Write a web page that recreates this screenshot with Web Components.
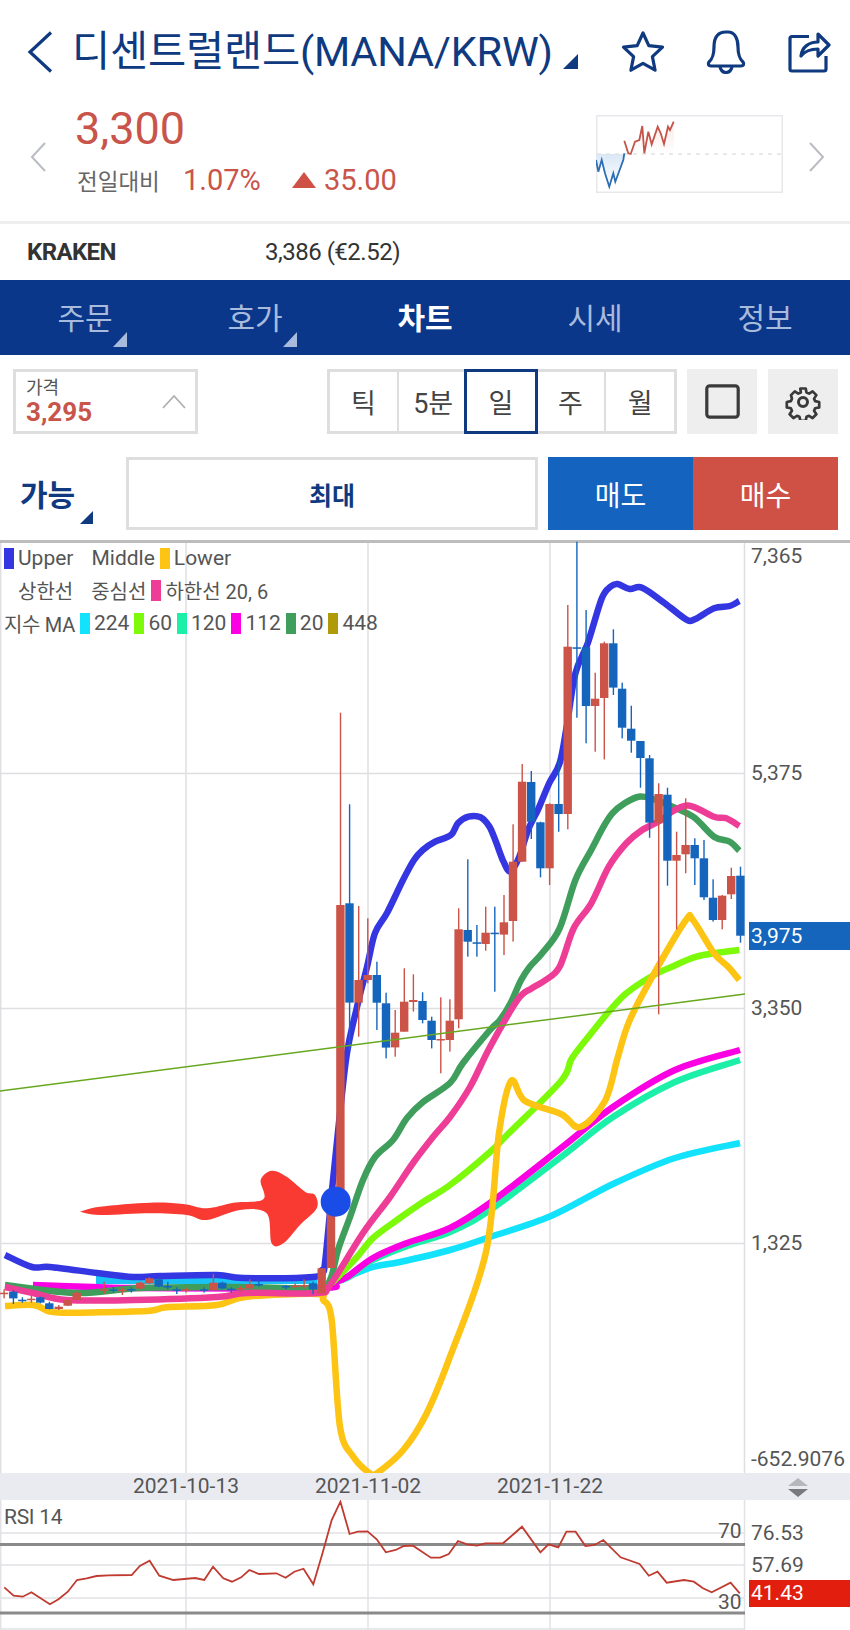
<!DOCTYPE html>
<html lang="ko">
<head>
<meta charset="utf-8">
<title>MANA/KRW</title>
<style>
  html, body { margin: 0; background: #fff; }
  body { width: 850px; font-family: Roboto, "Noto Sans CJK KR", sans-serif; }
</style>
</head>
<body>
<trade-screen>
  <coin-header title-text="디센트럴랜드(MANA/KRW)"></coin-header>
  <coin-quote></coin-quote>
  <exchange-row name="KRAKEN" value="3,386 (€2.52)"></exchange-row>
  <tab-bar></tab-bar>
  <chart-toolbar></chart-toolbar>
  <order-row></order-row>
  <price-chart></price-chart>
  <date-strip></date-strip>
  <rsi-panel></rsi-panel>
</trade-screen>

<script>
(function () {
  const FONT = 'Roboto, "Noto Sans CJK KR", sans-serif';
  const NAVY = '#0f3a80';
  const RED = '#c9544a';

  // small helper, every element is the same: open root + fixed markup
  function define(name, html) {
    customElements.define(name, class extends HTMLElement {
      constructor() {
        super();
        this.attachShadow({ mode: 'open' });
      }
      connectedCallback() {
        this.shadowRoot.innerHTML = typeof html === 'function' ? html(this) : html;
      }
    });
  }

  const pts = (list) => list.map((p) => p[0].toFixed(1) + ',' + p[1].toFixed(1)).join(' ');
  // crops of the chart were read in their own coordinates
  const z3 = (list) => list.map((p) => [300 + p[0] / 2.85, 540 + p[1] / 3]);
  const z4 = (list) => list.map((p) => [p[0] / 3, 1150 + p[1] / 3]);

  // catmull-rom through the points, the chart's averages are rounded
  function smooth(p) {
    let d = `M${p[0][0].toFixed(1)} ${p[0][1].toFixed(1)}`;
    for (let i = 0; i < p.length - 1; i++) {
      const a = p[i - 1] || p[i], b = p[i], c = p[i + 1], e = p[i + 2] || c;
      d += `C${(b[0] + (c[0] - a[0]) / 6).toFixed(1)} ${(b[1] + (c[1] - a[1]) / 6).toFixed(1)} ` +
        `${(c[0] - (e[0] - b[0]) / 6).toFixed(1)} ${(c[1] - (e[1] - b[1]) / 6).toFixed(1)} ${c[0].toFixed(1)} ${c[1].toFixed(1)}`;
    }
    return d;
  }

  define('trade-screen', `
    <style>:host { display: block; width: 850px; font-family: ${FONT}; overflow: hidden; }</style>
    <slot></slot>`);

  define('coin-header', (el) => `
    <style>
      :host { display: flex; align-items: center; height: 104px; box-sizing: border-box; position: relative; color: ${NAVY}; }
      .back { margin-left: 27px; width: 27px; height: 42px; flex: none; }
      h1 { margin: 0 0 0 18px; font: 400 41.5px/1 ${FONT}; white-space: nowrap; letter-spacing: -.2px; width: 478px; }
      .tri { width: 15px; height: 15px; margin: 18px 0 0 13px; flex: none; }
      .icons { display: flex; margin-left: 43px; gap: 41px; align-items: center; }
      svg { display: block; }
    </style>
    <svg class="back" viewBox="0 0 27 42" fill="none" stroke="${NAVY}" stroke-width="3.2"><path d="M24 1.5 3 21l21 19.5"/></svg>
    <h1>${el.getAttribute('title-text')}</h1>
    <svg class="tri" viewBox="0 0 15 15"><path d="M15 0v15H0z" fill="${NAVY}"/></svg>
    <div class="icons">
      <svg width="44" height="44" viewBox="0 0 44 44" fill="none" stroke="${NAVY}" stroke-width="3.2" stroke-linejoin="round"><path d="M22 3l5.800 12.600 13.700 1.600-10.100 9.400 2.700 13.600L22 33.400 9.900 40.200l2.700-13.600L2.500 17.200l13.700-1.600z"/></svg>
      <svg width="40" height="44" viewBox="0 0 40 44" fill="none" stroke="${NAVY}" stroke-width="3.2" stroke-linejoin="round"><path d="M20 2C11 2 8 9 8 17c0 9-2 12-5 15-1.500 2-.5 4 2 4h30c2.500 0 3.500-2 2-4-3-3-5-6-5-15 0-8-3-15-10-15z"/><path d="M14 36c0 4 3 6.500 6 6.500s6-2.500 6-6.500"/></svg>
      <svg style="margin-left:1px" width="43" height="42" viewBox="0 0 43 42" fill="none" stroke="${NAVY}" stroke-width="3.200" stroke-linejoin="round"><path d="M21 5.500H4a2 2 0 0 0-2 2V38a2 2 0 0 0 2 2h32a2 2 0 0 0 2-2V25"/><path d="M13 25c1-9 8-14 17-14V3l11 11-11 11v-7c-7 0-13 2-17 7z"/></svg>
    </div>`);

  define('coin-quote', () => {
    const blue = [[596, 160], [598.300, 171.700], [601.700, 160], [605, 173.300], [609.300, 186.700], [613.300, 173.300], [615.300, 181.700], [623.300, 160], [624.300, 153.300]];
    const red = [[624.300, 140.700], [628.300, 153.300], [630.700, 154], [635, 141.700], [639.300, 140], [642.300, 126], [644.300, 153.300], [648.300, 131.700], [651.700, 144.300], [657.700, 126.700], [660.700, 133.300], [664, 144], [668, 126.700], [670, 130], [673.700, 121.700]];
    const o = (list) => list.map((p) => [p[0] - 596, p[1] - 115]);
    return `
    <style>
      :host { display: flex; height: 120px; box-sizing: border-box; border-bottom: 3px solid #eeeeee; align-items: flex-start; }
      .arrow { width: 17px; height: 30px; flex: none; margin-top: 38px; display: block; }
      .main { margin-left: 28px; width: 521px; flex: none; }
      .price { font: 400 45px/1 ${FONT}; color: ${RED}; margin-top: 2px; height: 52px; }
      .row { display: flex; align-items: center; height: 30px; margin-top: 7px; }
      .lbl { font-size: 22.500px; color: #666; width: 106px; margin-left: 2px; }
      .pct { font-size: 29px; color: ${RED}; width: 109px; }
      .up { width: 0; height: 0; border: 12px solid transparent; border-top: 0; border-bottom: 16px solid #cf5145; }
      .amt { font-size: 29px; color: ${RED}; margin-left: 8px; }
      .spark { width: 187px; height: 78px; margin: 11px 0 0 0; box-sizing: border-box; flex: none; display: block; }
      .right { margin-left: 25px; }
    </style>
    <svg class="arrow" style="margin-left:30px" viewBox="0 0 17 30" fill="none" stroke="#b9bcc2" stroke-width="2"><path d="M15 1 2 15l13 14"/></svg>
    <div class="main">
      <div class="price">3,300</div>
      <div class="row">
        <span class="lbl">전일대비</span><span class="pct">1.07%</span><span class="up"></span><span class="amt">35.00</span>
      </div>
    </div>
    <svg class="spark" viewBox="0 0 187 78">
      <defs>
        <linearGradient id="gb" x1="0" y1="0" x2="0" y2="1"><stop offset="0" stop-color="#d9e7f6"/><stop offset="1" stop-color="#fff"/></linearGradient>
        <linearGradient id="gr" x1="0" y1="0" x2="0" y2="1"><stop offset="0" stop-color="#fbe9e6"/><stop offset="1" stop-color="#fff"/></linearGradient>
      </defs>
      <rect x=".75" y=".75" width="185.500" height="76.500" fill="#fff" stroke="#e6e8ec" stroke-width="1.500"/>
      <polygon points="${pts(o(blue))} 28.300,39 0,39" fill="url(#gb)"/>
      <polygon points="${pts(o(red))} 78,39 28.300,39" fill="url(#gr)"/>
      <line x1="1" x2="186" y1="39" y2="39" stroke="#e2e2e2" stroke-width="1.500" stroke-dasharray="4 5"/>
      <polyline points="${pts(o(blue))}" fill="none" stroke="#2c6db5" stroke-width="1.800"/>
      <polyline points="${pts(o(red))}" fill="none" stroke="#c2544a" stroke-width="1.800"/>
    </svg>
    <svg class="arrow right" viewBox="0 0 17 30" fill="none" stroke="#b9bcc2" stroke-width="2"><path d="M2 1l13 14L2 29"/></svg>`;
  });

  define('exchange-row', (el) => `
    <style>
      :host { display: flex; align-items: center; height: 56px; color: #333; }
      b { margin-left: 27px; width: 238px; font-size: 24px; font-weight: 700; letter-spacing: -.6px; }
      span { font-size: 24px; letter-spacing: -.5px; }
    </style>
    <b>${el.getAttribute('name')}</b><span>${el.getAttribute('value')}</span>`);

  define('tab-bar', () => {
    const tabs = [['주문', 1], ['호가', 1], ['차트', 0, 1], ['시세'], ['정보']];
    return `
    <style>
      :host { display: grid; grid-template-columns: repeat(5, 1fr); height: 75px; background: #0a378a; }
      div { position: relative; display: flex; align-items: center; justify-content: center; font-size: 30px; color: #a9bbdd; padding-bottom: 3px; }
      .on { color: #fff; font-weight: 700; }
      i { position: absolute; left: 113px; bottom: 8px; width: 14px; height: 15px; background: #a9bbdd; clip-path: polygon(100% 0, 100% 100%, 0 100%); }
    </style>
    ${tabs.map((t) => `<div class="${t[2] ? 'on' : ''}">${t[0]}${t[1] ? '<i></i>' : ''}</div>`).join('')}`;
  });

  define('chart-toolbar', () => `
    <style>
      :host { display: flex; align-items: stretch; height: 65px; margin-top: 14px; padding: 0 12px 0 13px; }
      .price-box { width: 185px; box-sizing: border-box; border: 3px solid #dedede; position: relative; padding: 5px 0 0 10px; }
      .price-box small { display: block; font-size: 18px; line-height: 21px; color: #555; }
      .price-box b { display: block; font-size: 26px; line-height: 28px; color: ${RED}; }
      .price-box svg { position: absolute; right: 9px; top: 23px; }
      .seg { display: flex; margin-left: 129px; border: 3px solid #dedede; box-sizing: border-box; width: 351px; }
      .seg span { flex: 1; display: flex; align-items: center; justify-content: center; font-size: 27px; color: #444; border-left: 2px solid #dedede; }
      .seg span:first-child { border-left: 0; }
      .seg span.on { outline: 3px solid ${NAVY}; outline-offset: 0; border-left: 0; position: relative; }
      .sq { width: 70px; background: #eeeeee; display: flex; align-items: center; justify-content: center; flex: none; }
      .sq.a { margin-left: 10px; }
      .sq.b { margin-left: 11px; }
    </style>
    <div class="price-box">
      <small>가격</small><b>3,295</b>
      <svg width="24" height="14" viewBox="0 0 24 14" fill="none" stroke="#b0b0b0" stroke-width="1.800"><path d="M1 13 12 1l11 12"/></svg>
    </div>
    <div class="seg"><span>틱</span><span>5분</span><span class="on">일</span><span>주</span><span>월</span></div>
    <div class="sq a"><svg width="35" height="35" viewBox="0 0 35 35" fill="none" stroke="#3a3a3a" stroke-width="3.200"><rect x="1.800" y="1.800" width="31.400" height="31.400" rx="3"/></svg></div>
    <div class="sq b"><svg width="36" height="36" viewBox="0 0 24 24" fill="none" stroke="#3a3a3a" stroke-width="2" stroke-linejoin="round"><circle cx="12" cy="12" r="3"/><path d="M10 2h4l.6 3 1.900.8 2.600-1.700 2.800 2.800-1.700 2.600.8 1.900 3 .6v4l-3 .6-.8 1.900 1.700 2.600-2.800 2.800-2.600-1.700-1.900.8-.6 3h-4l-.6-3-1.900-.8-2.600 1.700-2.800-2.800 1.700-2.600-.8-1.900-3-.6v-4l3-.6.8-1.900L3.100 6.900l2.800-2.800 2.600 1.700L10.400 5z" transform="translate(1.200 1.200) scale(.9)"/></svg></div>`);

  define('order-row', () => `
    <style>
      :host { display: flex; height: 73px; margin-top: 23px; padding: 0 12px 0 20px; position: relative; align-items: stretch; }
      .kind { width: 106px; font-size: 30px; font-weight: 700; color: ${NAVY}; display: flex; align-items: center; padding-bottom: 2px; box-sizing: border-box; flex: none; }
      i { position: absolute; left: 80px; top: 54px; width: 13px; height: 13px; background: ${NAVY}; clip-path: polygon(100% 0, 100% 100%, 0 100%); }
      .max { width: 412px; box-sizing: border-box; border: 3px solid #dedede; display: flex; align-items: center; justify-content: center; font-size: 25px; font-weight: 700; color: ${NAVY}; flex: none; }
      .btn { width: 145px; display: flex; align-items: center; justify-content: center; color: #fff; font-size: 28px; flex: none; }
      .sell { background: #1464bf; margin-left: 10px; }
      .buy { background: #cf5145; }
    </style>
    <div class="kind">가능</div><i></i>
    <div class="max">최대</div>
    <div class="btn sell">매도</div><div class="btn buy">매수</div>`);

  // one swatch + its label
  define('legend-key', (el) => `
    <style>
      :host { display: inline-flex; align-items: center; white-space: nowrap; }
      i { width: 10px; height: 21px; margin: 0 4px 0 5px; background: ${el.getAttribute('color')}; flex: none; }
    </style>
    <i></i><slot></slot>`);

  // read from the crop: [x, wickTop, wickBottom, bodyTop, bodyBottom, up]
  const CANDLES = [
    [115, 518, 1950, 1095, 1950, 1], [141, 793, 1530, 1090, 1388, 0], [167, 1098, 1490, 1320, 1388, 1],
    [193, 1135, 1330, 1305, 1320, 1], [219, 1265, 1470, 1305, 1388, 0], [245, 1358, 1555, 1390, 1523, 0],
    [271, 1410, 1550, 1478, 1522, 1], [297, 1285, 1475, 1385, 1475, 1], [323, 1303, 1415, 1380, 1386, 1],
    [349, 1357, 1450, 1383, 1440, 0], [375, 1430, 1525, 1442, 1500, 0], [401, 1372, 1600, 1497, 1500, 1],
    [427, 1378, 1535, 1442, 1500, 1], [452, 1105, 1465, 1168, 1438, 1], [478, 958, 1250, 1170, 1205, 0],
    [504, 1155, 1250, 1207, 1209, 0], [529, 1100, 1232, 1178, 1212, 1], [555, 1100, 1355, 1178, 1182, 0],
    [581, 1065, 1245, 1147, 1184, 1], [607, 853, 1205, 965, 1143, 1], [633, 672, 965, 725, 965, 1],
    [659, 693, 897, 726, 845, 0], [685, 845, 1012, 847, 985, 0], [711, 790, 1035, 792, 985, 1],
    [737, 660, 875, 792, 822, 0], [763, 195, 868, 320, 822, 1], [789, 5, 533, 322, 324, 0],
    [815, 210, 610, 322, 498, 0], [841, 398, 635, 476, 498, 1], [867, 305, 658, 310, 474, 1],
    [893, 268, 465, 310, 443, 0], [918, 428, 595, 446, 563, 0], [944, 497, 638, 566, 602, 0],
    [970, 603, 743, 603, 654, 0], [996, 645, 893, 655, 848, 0], [1022, 730, 1423, 762, 848, 1],
    [1047, 743, 1037, 764, 962, 0], [1073, 875, 1168, 945, 962, 1], [1099, 775, 1000, 915, 943, 1],
    [1125, 895, 1035, 915, 955, 0], [1151, 900, 1080, 955, 1072, 0], [1177, 1018, 1145, 1073, 1140, 0],
    [1203, 1065, 1168, 1067, 1140, 1], [1229, 983, 1077, 1008, 1063, 1], [1255, 980, 1208, 1007, 1187, 0]
  ];
  // the flat stretch before the spike, from the lower crop
  const FLAT = [
    [12, 418, 445, 428, 432, 1], [40, 420, 462, 425, 445, 0], [67, 442, 458, 449, 451, 0], [94, 438, 458, 446, 448, 1],
    [121, 440, 460, 442, 458, 0], [148, 455, 478, 460, 477, 0], [176, 465, 480, 470, 477, 1], [203, 445, 468, 450, 467, 1],
    [230, 425, 452, 428, 450, 1], [312, 395, 432, 418, 420, 1], [340, 412, 428, 418, 420, 0], [367, 412, 435, 419, 421, 1],
    [394, 412, 428, 417, 419, 0], [421, 395, 418, 398, 415, 1], [448, 382, 402, 385, 400, 1], [476, 385, 412, 388, 410, 0],
    [503, 395, 418, 408, 410, 0], [530, 412, 432, 418, 420, 0], [558, 412, 428, 418, 420, 1], [612, 412, 428, 418, 420, 0],
    [640, 372, 422, 398, 420, 1], [667, 395, 418, 398, 415, 0], [694, 412, 428, 416, 418, 0], [722, 408, 425, 414, 416, 1],
    [749, 388, 418, 403, 415, 1], [776, 392, 410, 402, 404, 0], [858, 405, 418, 408, 410, 0], [885, 400, 415, 407, 409, 1],
    [912, 388, 415, 405, 407, 1], [939, 395, 432, 400, 418, 0], [965, 355, 432, 355, 430, 1]
  ];

  const LINES = {
    cyan: [[330, 1284], [340, 1280], [373, 1267], [400, 1262], [450, 1250], [490, 1237], [551, 1216], [613, 1184], [675, 1158], [740, 1143]],
    spring: [[332, 1283], [347, 1278], [373, 1260], [407, 1246], [450, 1232], [490, 1210], [561, 1157], [613, 1117], [675, 1082], [740, 1060]],
    magenta: [[33, 1285], [93, 1287], [140, 1288], [320, 1288], [332, 1283], [347, 1277], [373, 1258], [407, 1243], [450, 1228], [490, 1203], [561, 1148], [613, 1107], [675, 1070], [740, 1050]],
    lime: [[332, 1283], [357, 1257], [373, 1238], [397, 1220], [423, 1202], [450, 1185], [490, 1152], [509, 1133], [561, 1081], ...z3([[775, 1555], [830, 1480], [880, 1415], [930, 1360], [1000, 1310], [1060, 1280], [1130, 1250], [1200, 1237], [1252, 1230]])],
    yellow: [...z4([[15, 468], [100, 465], [150, 485], [200, 488], [300, 487], [450, 482], [500, 472], [650, 465], [740, 440], [950, 432], [970, 450], [995, 510], [1020, 830], [1060, 920], [1110, 970], [1130, 970], [1210, 900], [1280, 790], [1350, 620]]), [486, 1252], [499, 1133], [511, 1081], [525, 1101], [561, 1114], [580, 1127], [605, 1101], ...z3([[905, 1555], [940, 1440], [1020, 1280], [1100, 1140], [1120, 1140], [1180, 1240], [1220, 1280], [1252, 1320]])],
    green: [[5, 1285], [77, 1293], [140, 1288], [233, 1287], [317, 1288], [330, 1280], [338, 1250], [350, 1217], [363, 1180], [375, 1157], [393, 1140], [407, 1118], [423, 1102], [450, 1083], [463, 1063], [490, 1030], ...z3([[570, 1440], [600, 1390], [630, 1320], [655, 1280], [690, 1240], [740, 1165], [785, 1020], [830, 930], [865, 860], [890, 820], [925, 790], [965, 770], [1000, 775], [1050, 795], [1120, 830], [1180, 890], [1225, 905], [1252, 932]])],
    pink: [[5, 1287], [33, 1293], [67, 1300], [133, 1300], [217, 1297], [247, 1293], [317, 1293], [330, 1285], [363, 1233], [390, 1197], [413, 1163], [433, 1137], [450, 1117], [470, 1087], [490, 1047], ...z3([[620, 1380], [660, 1345], [700, 1320], [740, 1280], [780, 1165], [830, 1090], [880, 980], [930, 910], [975, 870], [1030, 840], [1060, 815], [1110, 797], [1180, 830], [1215, 835], [1252, 858]])],
    upper: [[5, 1255], [32, 1267], [50, 1267], [97, 1273], [133, 1277], [160, 1276], [217, 1275], [243, 1278], [313, 1277], [322, 1270], [325, 1263], [333, 1180], [340, 1113], [347, 1053], [357, 1007], [367, 967], [375, 933], [387, 913], [403, 880], ...z3([[325, 960], [350, 930], [385, 905], [430, 885], [450, 850], [480, 830], [515, 832], [540, 860], [560, 910], [580, 965], [600, 995], [625, 950], [650, 870], [680, 805], [710, 730], [740, 670], [760, 560], [785, 400], [820, 310], [860, 175], [885, 140], [905, 132], [940, 147], [975, 143], [1040, 190], [1100, 238], [1125, 238], [1180, 205], [1225, 198], [1252, 183]])]
  };
  const ARROW = z4([[240, 185], [300, 170], [450, 158], [550, 162], [620, 175], [700, 158], [790, 148], [782, 90], [815, 62], [860, 80], [915, 125], [945, 135], [950, 175], [900, 225], [850, 280], [815, 280], [800, 190], [720, 180], [620, 210], [560, 195], [450, 190], [300, 195], [240, 185]]);

  function candle(x, wt, wb, bt, bb, up) {
    const c = up ? '#cb5348' : '#1565bd';
    const h = Math.max(bb - bt, 1.500);
    return `<rect x="${(x - .6).toFixed(1)}" y="${wt.toFixed(1)}" width="1.400" height="${(wb - wt).toFixed(1)}" fill="${c}"/>` +
      `<rect x="${(x - 4.200).toFixed(1)}" y="${bt.toFixed(1)}" width="8.400" height="${h.toFixed(1)}" fill="${c}"/>`;
  }

  function candles() {
    const main = CANDLES.map((c) => candle(300 + c[0] / 2.85, 540 + c[1] / 3, 540 + c[2] / 3, 540 + c[3] / 3, 540 + c[4] / 3, c[5]));
    const flat = FLAT.map((c) => candle(c[0] / 3, 1150 + c[1] / 3, 1150 + c[2] / 3, 1150 + c[3] / 3, 1150 + c[4] / 3, c[5]));
    return flat.join('') + candle(331, 1190, 1268, 1190, 1268, 1) + main.join('');
  }

  const curve = (list, color, w) => `<path d="${smooth(list)}" fill="none" stroke="${color}" stroke-width="${w || 6.500}" stroke-linejoin="round"/>`;

  define('price-chart', () => `
    <style>
      :host { display: block; position: relative; height: 933px; margin-top: 10px; font-size: 21px; color: #555; overflow: hidden; }
      svg { display: block; position: absolute; left: 0; top: 0; }
      .legend { position: absolute; left: 0; top: 2px; }
      .legend div { display: flex; height: 32.500px; align-items: center; white-space: nowrap; }
      .legend .ko { font-size: 20px; }
      .t { position: absolute; left: 751px; line-height: 22px; }
      .last { position: absolute; left: 749px; top: 382px; width: 101px; height: 28px; line-height: 28px; background: #1565bd; color: #fff; padding-left: 2px; box-sizing: border-box; }
    </style>
    <svg width="850" height="933" viewBox="0 540 850 933">
      <rect x="0" y="540" width="850" height="3" fill="#bdbdbd"/>
      <g stroke="#dfdfe3" stroke-width="1.500" fill="none">
        <path d="M.7 543v930M186 543v930M368 543v930M550 543v930M744.500 543v930"/>
        <path d="M0 773.500h745M0 1008.500h745M0 1243.500h745"/>
      </g>
      ${curve(LINES.cyan, '#12e2fb')}
      <rect x="96" y="1276" width="221" height="8" fill="#19c3f5"/>
      ${curve(LINES.spring, '#1cf0a8')}
      ${curve(LINES.magenta, '#fb00e2')}
      ${curve(LINES.lime, '#7df90a')}
      ${curve(LINES.yellow, '#fdc414')}
      ${curve(LINES.green, '#3f9e5c')}
      ${curve(LINES.pink, '#ee3d96')}
      ${curve(LINES.upper, '#3436e2')}
      ${candles()}
      <path d="M0 1091 745 994" stroke="#67a81f" stroke-width="1.500" fill="none"/>
      <path d="${smooth(ARROW)}z" fill="#f93a32"/>
      <circle cx="335.700" cy="1201.700" r="15" fill="#1a4de8"/>
    </svg>
    <div class="legend">
      <div><legend-key color="#3436e2" style="margin-left:-1px">Upper</legend-key><span style="margin-left:18px">Middle</span><legend-key color="#fdc414">Lower</legend-key></div>
      <div class="ko"><span style="margin-left:18px">상한선</span><span style="margin-left:18px">중심선</span><legend-key color="#ee3d96">하한선 20, 6</legend-key></div>
      <div><span style="margin-left:4px;font-size:20px;letter-spacing:-.3px">지수 MA</span><legend-key color="#12e2fb">224</legend-key><legend-key color="#7df90a">60</legend-key><legend-key color="#1cf0a8">120</legend-key><legend-key color="#fb00e2">112</legend-key><legend-key color="#3f9e5c">20</legend-key><legend-key color="#b09a08">448</legend-key></div>
    </div>
    <span class="t" style="top:5px">7,365</span>
    <span class="t" style="top:222px">5,375</span>
    <span class="t" style="top:457px">3,350</span>
    <span class="t" style="top:692px">1,325</span>
    <span class="t" style="top:908px">-652.9076</span>
    <span class="last">3,975</span>`);

  define('date-strip', () => `
    <style>
      :host { display: block; position: relative; height: 27px; background: #e9ebf1; font-size: 21px; line-height: 27px; color: #555; }
      span { position: absolute; top: 0; transform: translateX(-50%); }
      svg { position: absolute; left: 788px; top: 5px; }
    </style>
    <span style="left:186px">2021-10-13</span><span style="left:368px">2021-11-02</span><span style="left:550px">2021-11-22</span>
    <svg width="20" height="19" viewBox="0 0 20 19"><path d="M10 0l10 8H0z" fill="#b5b7bc"/><path d="M0 11h20l-10 8z" fill="#77797e"/></svg>`);

  define('rsi-panel', () => {
    const raw = [[8, 442], [25, 467], [42, 470], [58, 457], [92, 493], [108, 478], [125, 455], [142, 420], [160, 415], [178, 408], [200, 406], [243, 405], [258, 378], [276, 362], [294, 407], [320, 420], [360, 414], [377, 420], [393, 380], [412, 415], [428, 425], [445, 412], [460, 390], [478, 402], [510, 400], [527, 413], [543, 395], [560, 386], [578, 433], [595, 340], [612, 240], [628, 185], [645, 282], [660, 275], [678, 274], [695, 298], [712, 337], [730, 330], [745, 318], [762, 317], [795, 353], [812, 353], [828, 342], [845, 303], [862, 313], [880, 317], [895, 310], [928, 310], [963, 260], [997, 337], [1012, 313], [1030, 322], [1045, 275], [1062, 275], [1080, 318], [1097, 315], [1113, 300], [1145, 352], [1180, 372], [1197, 407], [1213, 395], [1230, 428], [1262, 420], [1280, 425], [1297, 445], [1313, 457], [1348, 428], [1365, 460]];
    const p = raw.map((q) => [q[0] / 1.845, 1440 + q[1] / 3]);
    return `
    <style>
      :host { display: block; position: relative; height: 130px; font-size: 21px; color: #555; overflow: hidden; }
      svg { position: absolute; left: 0; top: 0; display: block; }
      span { position: absolute; line-height: 22px; }
      .neg { left: 749px; top: 80px; width: 101px; height: 27px; line-height: 27px; background: #e21e0f; color: #fff; padding-left: 2px; box-sizing: border-box; }
    </style>
    <svg width="850" height="130" viewBox="0 1500 850 130">
      <path d="M186 1500v130M368 1500v130M550 1500v130M744.500 1500v130M.7 1500v130M0 1533h745M0 1565h745M0 1598h745M0 1629h745" stroke="#e2e2e6" stroke-width="1.500" fill="none"/>
      <path d="M0 1544.500h745M0 1613h745" stroke="#8a8a8a" stroke-width="3" fill="none"/>
      <polyline points="${pts(p)}" fill="none" stroke="#bf3b30" stroke-width="1.800"/>
    </svg>
    <span style="left:4px;top:6px;letter-spacing:-.3px">RSI 14</span>
    <span style="left:718px;top:20px">70</span>
    <span style="left:718px;top:91px">30</span>
    <span style="left:751px;top:22px">76.53</span>
    <span style="left:751px;top:54px">57.69</span>
    <span class="neg">41.43</span>`;
  });
})();
</script>
</body>
</html>
